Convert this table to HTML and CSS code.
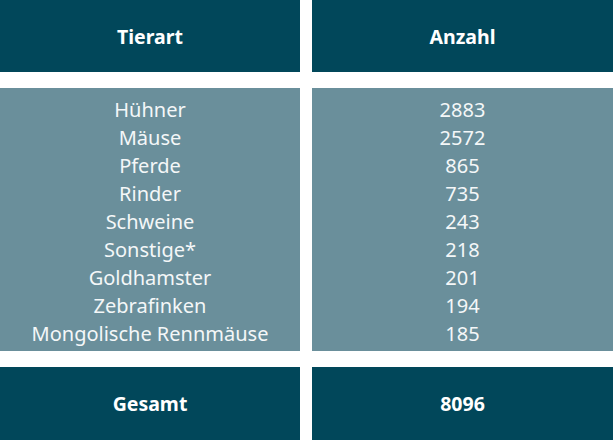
FILE: index.html
```html
<!DOCTYPE html>
<html lang="de">
<head>
<meta charset="utf-8">
<link rel="stylesheet" href="styles.css">
</head>
<body>
<div class="table">
  <div class="cell head">Tierart</div>
  <div class="cell head">Anzahl</div>
  <div class="cell body">
    <div>Hühner</div><div>Mäuse</div><div>Pferde</div><div>Rinder</div><div>Schweine</div><div>Sonstige*</div><div>Goldhamster</div><div>Zebrafinken</div><div>Mongolische Rennmäuse</div>
  </div>
  <div class="cell body">
    <div>2883</div><div>2572</div><div>865</div><div>735</div><div>243</div><div>218</div><div>201</div><div>194</div><div>185</div>
  </div>
  <div class="cell head">Gesamt</div>
  <div class="cell head">8096</div>
</div>
</body>
</html>
```
FILE: styles.css
```css
html, body { margin: 0; padding: 0; background: #fff; }
.table {
  display: grid;
  grid-template-columns: 300px 301px;
  grid-template-rows: 72px 263px 73px;
  column-gap: 12px;
  row-gap: 16px;
  font-family: "Noto Sans", "Open Sans", sans-serif;
}
.cell {
  display: flex;
  flex-direction: column;
  align-items: center;
  justify-content: center;
  color: #fff;
}
.head {
  background: #01475a;
  font-weight: 700;
  font-size: 19.5px;
}
.body {
  background: #6a8f9b;
  font-size: 20px;
  line-height: 28px;
  color: #f4f7f8;
  padding-top: 4px;
  box-sizing: border-box;
}
```
